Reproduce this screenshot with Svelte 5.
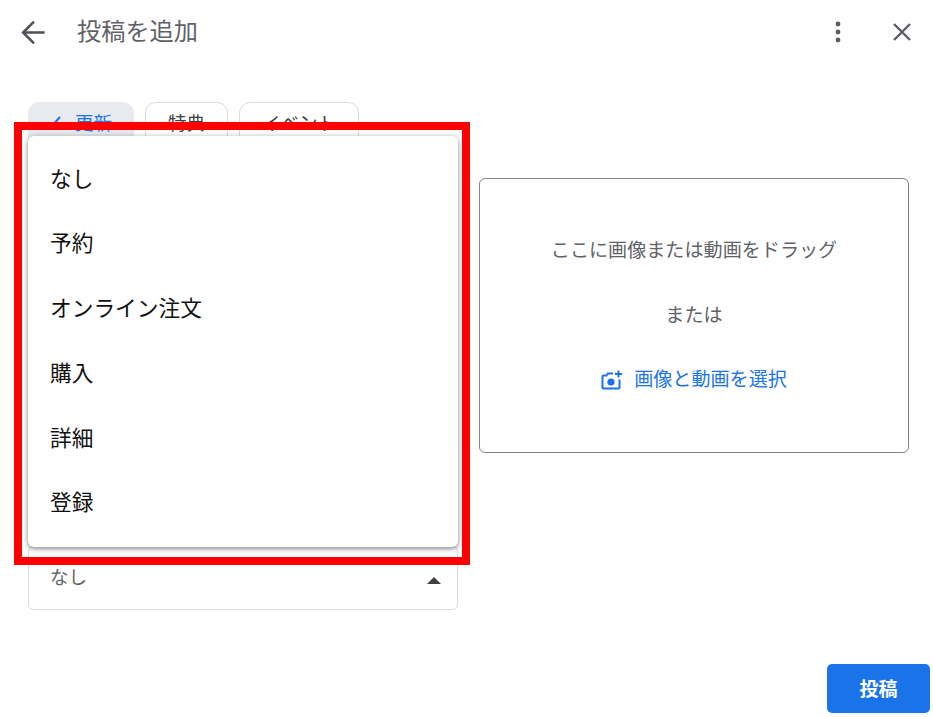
<script>
  const items = ['なし', '予約', 'オンライン注文', '購入', '詳細', '登録'];
  const chips = ['更新', '特典', 'イベント'];
</script>

<div class="page">
  <header class="top">
    <button class="icon back" aria-label="戻る">
      <svg viewBox="0 0 24 24" width="29" height="29"><path d="M21.2 12H3.8M12.4 3 3.4 12l9 9" fill="none" stroke="#4f5256" stroke-width="2.1"/></svg>
    </button>
    <h1>投稿を追加</h1>
    <button class="icon more" aria-label="その他">
      <svg viewBox="0 0 6 24" width="6" height="24"><circle cx="3" cy="4" r="2.4" fill="#5a5d61"/><circle cx="3" cy="12" r="2.4" fill="#5a5d61"/><circle cx="3" cy="20" r="2.4" fill="#5a5d61"/></svg>
    </button>
    <button class="icon close" aria-label="閉じる">
      <svg viewBox="0 0 20 20" width="20" height="20"><path d="M2 2l16 16M18 2L2 18" fill="none" stroke="#5a5d61" stroke-width="2.4"/></svg>
    </button>
  </header>

  <nav class="chips">
    {#each chips as c, i}
      <button class="chip" class:on={i === 0}>
        {#if i === 0}
          <svg viewBox="0 0 16 16" width="16" height="16"><path d="M1 9l4 4 9-10" fill="none" stroke="#1a73e8" stroke-width="2"/></svg>
        {/if}
        <span>{c}</span>
      </button>
    {/each}
  </nav>

  <main class="cols">
    <section class="left">
      <div class="select">
        <span>なし</span>
        <svg viewBox="0 0 14 7" width="14" height="7"><path d="M7 0l7 7H0z" fill="#3c4043"/></svg>
      </div>
    </section>
    <section class="drop">
      <p>ここに画像または動画をドラッグ</p>
      <p>または</p>
      <button class="pick">
        <svg viewBox="0 0 22 20" width="22" height="20"><path d="M12 3.5H6.8L5.5 5.5H2.5a1 1 0 0 0-1 1v11a1 1 0 0 0 1 1h15a1 1 0 0 0 1-1V9.5" fill="none" stroke="#1a73e8" stroke-width="2"/><circle cx="10" cy="12" r="3.6" fill="#1a73e8"/><path d="M17.5 0.5v7M14 4h7" fill="none" stroke="#1a73e8" stroke-width="2"/></svg>
        画像と動画を選択
      </button>
    </section>
  </main>

  <footer class="foot"><button class="post">投稿</button></footer>

  <ul class="menu">
    {#each items as it}<li>{it}</li>{/each}
  </ul>
  <div class="mark"></div>
</div>

<style>
  :global(body) { margin: 0; background: #fff; }
  .page {
    position: relative;
    width: 933px;
    height: 717px;
    overflow: hidden;
    display: flex;
    flex-direction: column;
    font-family: "Roboto", "Noto Sans CJK JP", sans-serif;
    color: #5f6368;
  }
  button { font: inherit; background: none; border: 0; padding: 0; color: inherit; }
  .top { display: flex; align-items: center; height: 64px; padding: 0 20px 0 19px; }
  .icon { display: flex; align-items: center; justify-content: center; }
  .back { width: 29px; height: 29px; }
  h1 { margin: 0 0 0 29px; font-size: 24.2px; font-weight: 400; flex: 1; color: #5f6368; line-height: 32px; }
  .more { width: 6px; margin-right: 51px; }
  .close { width: 20px; margin-right: 1px; }
  .chips { display: flex; gap: 11px; padding: 38px 0 0 28px; }
  .chip {
    display: flex; align-items: center; justify-content: center;
    box-sizing: border-box;
    height: 46px; padding: 0 22px 6px;
    border: 1px solid #dadce0; border-radius: 11px;
    font-size: 18.5px; color: #3c4043;
  }
  .chip.on { background: #e8eaf0; border-color: #e8eaf0; color: #1a73e8; padding: 0 21px 6px 17px; gap: 13px; }
  .cols { display: flex; gap: 21px; padding: 30px 0 0 28px; }
  .left { width: 430px; height: 432px; display: flex; flex-direction: column; justify-content: flex-end; }
  .select {
    box-sizing: border-box; height: 64px;
    display: flex; align-items: center; justify-content: space-between;
    padding: 0 16px 5px 21px;
    border: 1px solid #dadce0; border-radius: 5px;
    font-size: 18.5px; color: #5f6368;
  }
  .select svg { transform: translateY(5px); }
  .drop {
    box-sizing: border-box; width: 430px; height: 275px;
    border: 1px solid #80868b; border-radius: 6px;
    display: flex; flex-direction: column; align-items: center;
    padding-top: 58px; gap: 37px;
    font-size: 19.1px; color: #5f6368;
  }
  .drop p { margin: 0; line-height: 28px; height: 28px; }
  .pick { display: flex; align-items: center; gap: 11px; color: #1a73e8; line-height: 28px; transform: translateY(-1px); }
  .foot { position: absolute; right: 3px; bottom: 4px; }
  .post {
    width: 103px; height: 49px; border-radius: 5px; padding-bottom: 3px;
    background: #1a73e8; color: #fff; font-size: 19px; font-weight: 700;
  }
  .menu {
    position: absolute; left: 28px; top: 136px;
    box-sizing: border-box; width: 430px; height: 411px;
    margin: 0; padding: 11.5px 0 0; list-style: none;
    background: #fff; border-radius: 6px;
    box-shadow: 0 2px 4px rgba(60, 64, 67, .5), 0 0 7px rgba(60, 64, 67, .2);
  }
  .menu li {
    height: 64.8px; line-height: 64.8px; padding-left: 22px;
    font-size: 21.7px; color: #111;
  }
  .mark {
    position: absolute; left: 14px; top: 122px;
    box-sizing: border-box; width: 456px; height: 443px;
    border: 8px solid #ff0000;
  }
</style>
